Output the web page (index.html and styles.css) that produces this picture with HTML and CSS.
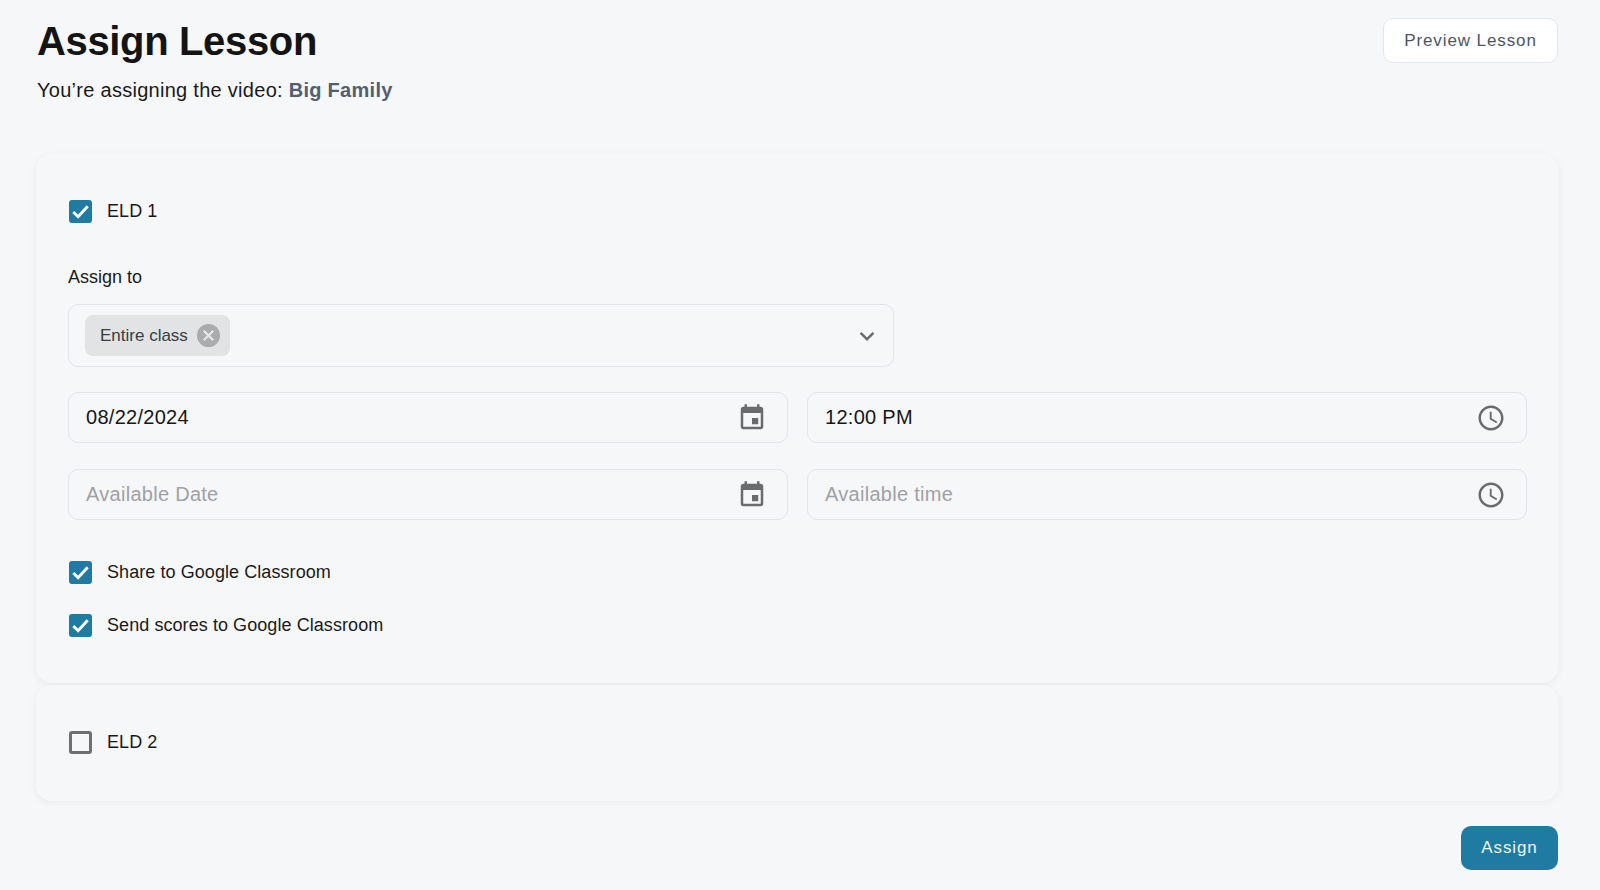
FILE: index.html
```html
<!DOCTYPE html>
<html lang="en">
<head>
    <meta charset="UTF-8">
    <meta name="viewport" content="width=device-width, initial-scale=1.0">
    <title>Assign Lesson</title>
    <link rel="stylesheet" href="styles.css">
</head>
<body>

    <svg class="icon-defs" width="0" height="0">
        <symbol id="check" viewBox="0 0 24 24"><path d="M4.5 12.5l5 5 10-11" fill="none" stroke="#fff" stroke-width="3"/></symbol>
        <symbol id="calendar" viewBox="0 0 24 24"><path d="M17 12h-5v5h5v-5zM16 1v2H8V1H6v2H5c-1.11 0-1.99.9-1.99 2L3 19c0 1.1.89 2 2 2h14c1.1 0 2-.9 2-2V5c0-1.1-.9-2-2-2h-1V1h-2zm3 18H5V8h14v11z" fill="#6b6b6b"/></symbol>
        <symbol id="clock" viewBox="0 0 24 24"><path d="M11.99 2C6.47 2 2 6.48 2 12s4.47 10 9.99 10C17.52 22 22 17.52 22 12S17.52 2 11.99 2zM12 20c-4.42 0-8-3.58-8-8s3.58-8 8-8 8 3.58 8 8-3.58 8-8 8zm.5-13H11v6l5.25 3.15.75-1.23-4.5-2.67z" fill="#6b6b6b"/></symbol>
    </svg>

    <header class="page-header">
        <div>
            <h1>Assign Lesson</h1>
            <p class="subtitle">You’re assigning the video: <strong>Big Family</strong></p>
        </div>
        <button class="btn btn-outline">Preview Lesson</button>
    </header>

    <section class="card card-open">
        <label class="check-row">
            <span class="checkbox checked"><svg><use href="#check"/></svg></span>
            ELD 1
        </label>

        <div class="field-label">Assign to</div>
        <div class="select-box">
            <span class="chip">
                Entire class
                <svg class="chip-close" viewBox="0 0 24 24"><circle cx="12" cy="12" r="12" fill="#a9abac"/><path d="M7 7l10 10M17 7L7 17" stroke="#e4e6e7" stroke-width="2.4"/></svg>
            </span>
            <svg class="chevron" viewBox="0 0 24 24"><path d="M5 8.5l7 7 7-7" fill="none" stroke="#6b6b6b" stroke-width="2.6"/></svg>
        </div>

        <div class="input-grid">
            <div class="input-box"><span>08/22/2024</span><svg class="input-icon"><use href="#calendar"/></svg></div>
            <div class="input-box"><span>12:00 PM</span><svg class="input-icon"><use href="#clock"/></svg></div>
            <div class="input-box placeholder"><span>Available Date</span><svg class="input-icon"><use href="#calendar"/></svg></div>
            <div class="input-box placeholder"><span>Available time</span><svg class="input-icon"><use href="#clock"/></svg></div>
        </div>

        <label class="check-row share-row">
            <span class="checkbox checked"><svg><use href="#check"/></svg></span>
            Share to Google Classroom
        </label>
        <label class="check-row scores-row">
            <span class="checkbox checked"><svg><use href="#check"/></svg></span>
            Send scores to Google Classroom
        </label>
    </section>

    <section class="card card-closed">
        <label class="check-row">
            <span class="checkbox"></span>
            ELD 2
        </label>
    </section>

    <div class="page-footer">
        <button class="btn btn-primary">Assign</button>
    </div>

</body>
</html>
```

FILE: styles.css
```css
html, body {
    height: 100%;
    margin: 0;
    padding: 0;
}
body {
    box-sizing: border-box;
    height: 890px;
    overflow: hidden;
    padding: 18px 42px 0 36px;
    background-color: #f6f7f9;
    font-family: "Liberation Sans", Arial, sans-serif;
    color: #1a1a1a;
}
.icon-defs {
    position: absolute;
}
.page-header {
    display: flex;
    justify-content: space-between;
    align-items: flex-start;
    height: 136px;
}
h1 {
    margin: 0;
    padding-left: 1px;
    font-size: 40px;
    line-height: 46px;
    font-weight: 700;
    letter-spacing: -0.35px;
    color: #141414;
}
.subtitle {
    margin: 13px 0 0;
    padding-left: 1px;
    font-size: 20px;
    line-height: 26px;
    letter-spacing: 0.28px;
}
.subtitle strong {
    color: #535f70;
}
.btn {
    font-family: inherit;
    font-size: 17px;
    letter-spacing: 0.9px;
    border-radius: 10px;
    height: 45px;
}
.btn-outline {
    width: 175px;
    background-color: #fff;
    border: 1px solid #e3e6ea;
    color: #4c5563;
}
.btn-primary {
    width: 97px;
    height: 44px;
    background-color: #1f7ba1;
    border: none;
    color: #eef6fa;
}
.card {
    box-sizing: border-box;
    width: 1522px;
    padding: 0 32px;
    border-radius: 16px;
    background-color: #f6f7f9;
    box-shadow: 0 2px 8px rgba(0, 0, 0, 0.05);
}
.card-open {
    height: 529px;
    padding-top: 45px;
}
.card-closed {
    height: 116px;
    margin-top: 2px;
    padding-top: 45px;
}
.check-row {
    display: flex;
    align-items: center;
    gap: 15px;
    height: 24px;
    font-size: 18px;
    letter-spacing: 0.07px;
    padding-left: 1px;
}
.checkbox {
    box-sizing: border-box;
    display: block;
    width: 23px;
    height: 23px;
    border: 3px solid #6f6f6f;
    border-radius: 3px;
}
.checkbox.checked {
    border: none;
    background-color: #1f7ba1;
}
.checkbox svg {
    display: block;
    width: 23px;
    height: 23px;
}
.field-label {
    margin-top: 42px;
    font-size: 18px;
    line-height: 24px;
}
.select-box {
    box-sizing: border-box;
    display: flex;
    align-items: center;
    justify-content: space-between;
    width: 826px;
    height: 63px;
    margin-top: 15px;
    padding: 0 16px;
    border: 1px solid #e2e4ea;
    border-radius: 10px;
}
.chip {
    display: flex;
    align-items: center;
    gap: 9px;
    height: 41px;
    padding: 0 10px 0 15px;
    border-radius: 8px;
    background-color: #e1e3e5;
    font-size: 17px;
    color: #3a3d40;
}
.chip-close {
    width: 23px;
    height: 23px;
}
.chevron {
    width: 22px;
    height: 22px;
    margin-right: -1px;
}
.input-grid {
    display: grid;
    grid-template-columns: 720px 720px;
    column-gap: 19px;
    row-gap: 26px;
    margin-top: 25px;
}
.input-box {
    box-sizing: border-box;
    display: flex;
    align-items: center;
    justify-content: space-between;
    height: 51px;
    padding: 0 20px 0 17px;
    border: 1px solid #e2e4ea;
    border-radius: 10px;
    font-size: 20px;
    letter-spacing: 0.28px;
    color: #161616;
}
.placeholder {
    color: #9fa1a5;
}
.input-icon {
    width: 30px;
    height: 30px;
}
.share-row {
    margin-top: 40px;
}
.scores-row {
    margin-top: 29px;
}
.page-footer {
    display: flex;
    justify-content: flex-end;
    width: 1522px;
    margin-top: 25px;
}
```
